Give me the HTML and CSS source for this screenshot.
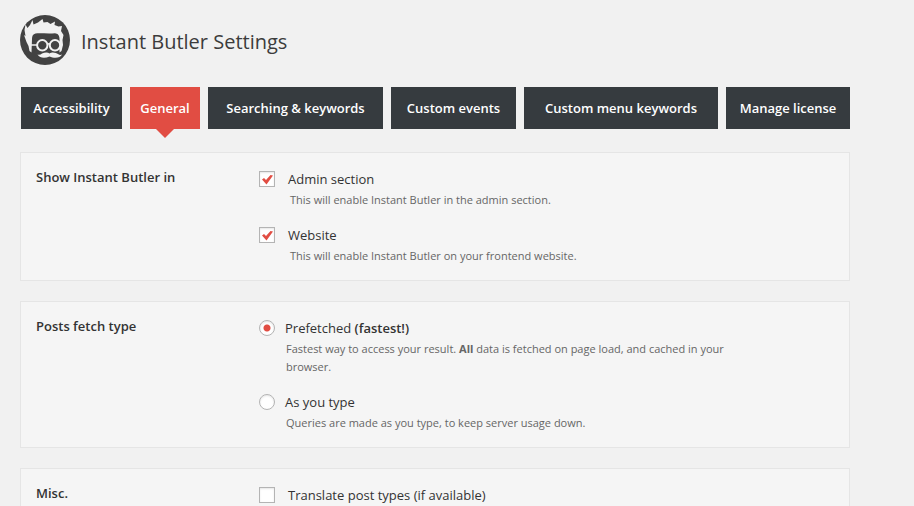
FILE: index.html
```html
<!DOCTYPE html>
<html lang="en">
<head>
<meta charset="utf-8">
<title>Instant Butler Settings</title>
<link rel="stylesheet" href="styles.css">
</head>
<body>
<main class="page">
  <header class="header">
    <svg class="logo" viewBox="0 0 50 50" aria-hidden="true">
      <circle cx="25" cy="25" r="25" fill="#424242"/>
      <path fill="#f1f1f1" d="M11.500 37.500L9.500 36L8.500 31L6.500 27L4 20L5.500 21L4.500 15L5.500 9.500L7.500 13L10 10L12.500 5L13.500 9.500L18 7.500L22.500 4L23.500 7.500L27.500 7L30.500 9L35 6.500L34.500 10L38.500 11.500L42 11L41 16L43.500 20L42.500 25L43 30L41.500 36L39.500 37.500L39.500 24C39.500 20 37.500 18.500 35 18.300C28 19 21 18 15.500 18.500C13 19 12 21 12 24Z"/>
      <path fill="none" stroke="#f1f1f1" stroke-width="1.500" d="M11 30H17M27.500 29.500Q29 28 30.500 29.500"/>
      <circle cx="22.300" cy="30.300" r="5.200" fill="#424242" stroke="#f1f1f1" stroke-width="2"/>
      <circle cx="35" cy="30.300" r="5.200" fill="#424242" stroke="#f1f1f1" stroke-width="2"/>
      <path fill="#f1f1f1" d="M29.500 38.500C32 36.500 36 37.500 38 39Q40 40.500 42 39.500C40 43.500 34 43.500 29.500 41.500C25 43.500 20 43.500 17.500 39.500Q20 40.500 22 38.500C25 37 28 37 29.500 38.500Z"/>
    </svg>
    <h1 class="title">Instant Butler Settings</h1>
  </header>

  <nav class="tabs" aria-label="Settings sections">
    <a class="tab" href="#accessibility">Accessibility</a>
    <a class="tab tab-active" href="#general" aria-current="page">General</a>
    <a class="tab" href="#searching">Searching &amp; keywords</a>
    <a class="tab" href="#events">Custom events</a>
    <a class="tab" href="#menu">Custom menu keywords</a>
    <a class="tab" href="#license">Manage license</a>
  </nav>

  <form class="panels">
    <section class="panel" role="group" aria-labelledby="show-heading">
      <h2 class="heading" id="show-heading">Show Instant Butler in</h2>
      <div class="options">
        <div class="option">
          <input class="control" type="checkbox" id="admin" checked>
          <label class="label" for="admin">Admin section</label>
          <p class="description">This will enable Instant Butler in the admin section.</p>
        </div>
        <div class="option">
          <input class="control" type="checkbox" id="website" checked>
          <label class="label" for="website">Website</label>
          <p class="description">This will enable Instant Butler on your frontend website.</p>
        </div>
      </div>
    </section>

    <section class="panel" role="group" aria-labelledby="fetch-heading">
      <h2 class="heading" id="fetch-heading">Posts fetch type</h2>
      <div class="options">
        <div class="option option-radio">
          <input class="control" type="radio" name="fetch" id="prefetched" checked>
          <label class="label" for="prefetched">Prefetched <strong>(fastest!)</strong></label>
          <p class="description">Fastest way to access your result. <strong>All</strong> data is fetched on page load, and cached in your browser.</p>
        </div>
        <div class="option option-radio">
          <input class="control" type="radio" name="fetch" id="typing">
          <label class="label" for="typing">As you type</label>
          <p class="description">Queries are made as you type, to keep server usage down.</p>
        </div>
      </div>
    </section>

    <section class="panel" role="group" aria-labelledby="misc-heading">
      <h2 class="heading" id="misc-heading">Misc.</h2>
      <div class="options">
        <div class="option">
          <input class="control" type="checkbox" id="translate">
          <label class="label" for="translate">Translate post types (if available)</label>
        </div>
      </div>
    </section>
  </form>
</main>
</body>
</html>
```
FILE: styles.css
```css
* {
  box-sizing: border-box;
}

html {
  overflow: hidden;
}

body {
  margin: 0;
  background: #f1f1f1;
  color: #333;
  font: 13px/20px "Open Sans", sans-serif;
}

.page {
  max-width: 870px;
  padding: 15px 20px 20px;
}

.header {
  display: flex;
  align-items: center;
  gap: 11px;
}

.logo {
  width: 50px;
  height: 50px;
}

.title {
  margin: 0;
  padding-top: 4px;
  color: #3c3c3c;
  font-size: 20px;
  font-weight: 400;
  line-height: 28px;
}

.tabs {
  display: grid;
  grid-template-columns: 101fr 70fr 175fr 125fr 194fr 124fr;
  gap: 8px;
  margin: 22px 0 23px;
  padding-left: 1px;
}

.tab {
  position: relative;
  background: #363b3f;
  color: #fff;
  font-weight: 600;
  line-height: 42px;
  text-align: center;
  text-decoration: none;
  white-space: nowrap;
}

.tab-active {
  background: #e14d43;
}

.tab-active::after {
  content: "";
  position: absolute;
  top: 100%;
  left: 50%;
  margin-left: -9px;
  border: 9px solid transparent;
  border-top-color: #e14d43;
  border-bottom: 0;
}

.panels {
  display: grid;
  gap: 20px;
}

.panel {
  display: grid;
  grid-template-columns: 208px minmax(0, 480px);
  column-gap: 15px;
  padding: 14px 15px 15px;
  background: #f5f5f5;
  border: 1px solid #e5e5e5;
}

.heading {
  margin: 0;
  font-size: 13px;
  font-weight: 600;
  line-height: 20px;
}

.options {
  display: grid;
  gap: 14px;
}

.option {
  display: grid;
  grid-template-columns: 16px 1fr;
  column-gap: 13px;
  align-items: center;
}

.option-radio {
  column-gap: 10px;
}

.label {
  line-height: 24px;
}

.label strong {
  font-weight: 600;
}

.description {
  grid-column: 2;
  margin: 0;
  padding-left: 2px;
  color: #666;
  font-size: 11px;
  line-height: 18px;
}

.option-radio .description {
  padding-left: 1px;
}

.control {
  appearance: none;
  width: 16px;
  height: 16px;
  margin: 0;
  border: 1px solid #b4b4b4;
  background: #fff;
  box-shadow: inset 0 1px 2px rgba(0, 0, 0, 0.1);
}

.control[type="radio"] {
  border-radius: 50%;
}

.control[type="checkbox"]:checked {
  background: #fff url("data:image/svg+xml,%3Csvg xmlns='http://www.w3.org/2000/svg' viewBox='0 0 14 14'%3E%3Cpath d='M2 7.500L4 6L6 8L10.500 3L13 3.500L6.500 12.500Z' fill='%23e14d43'/%3E%3C/svg%3E") center / 14px 14px no-repeat;
}

.control[type="radio"]:checked {
  background: radial-gradient(circle, #e14d43 0 3px, #fff 4px);
}
```
